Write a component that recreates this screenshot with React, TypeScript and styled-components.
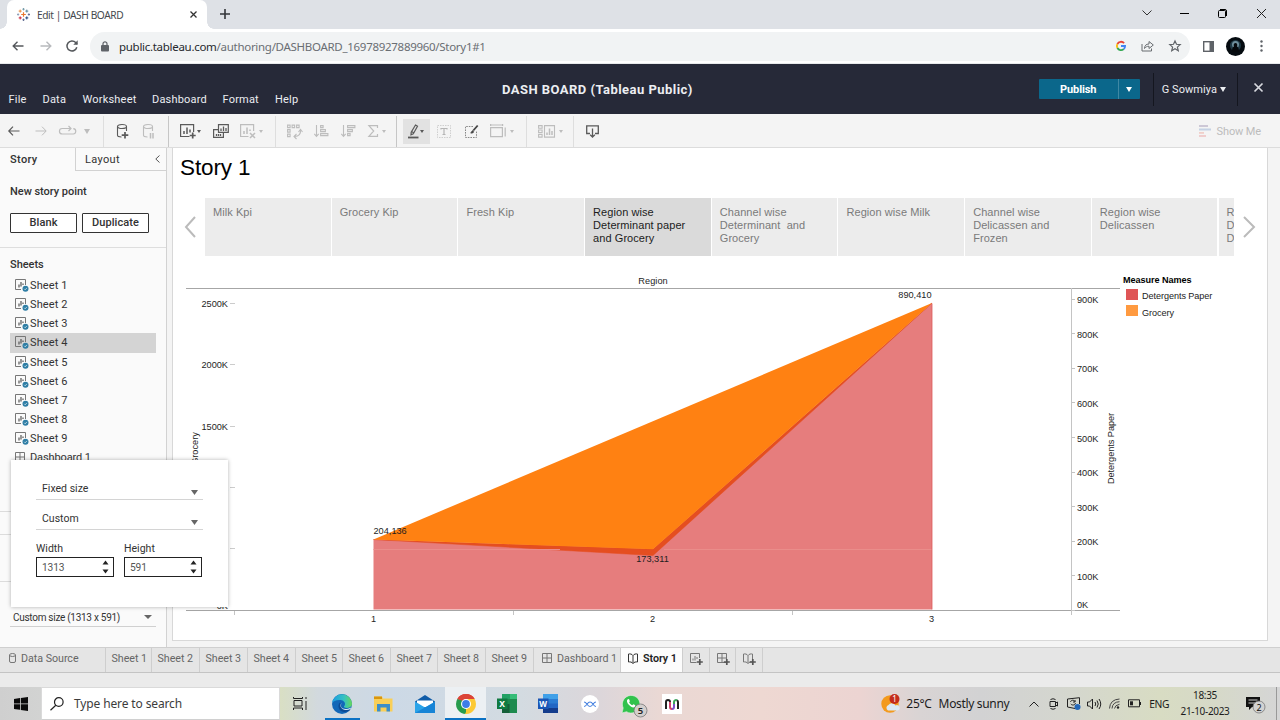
import React from "react";
import styled, { createGlobalStyle } from "styled-components";

const Global = createGlobalStyle`
  * { box-sizing: border-box; }
  body { margin: 0; overflow: hidden; background: #ebebeb; }
  svg { display: block; flex: none; overflow: visible; }
`;

const UI = `"Noto Sans", "Open Sans", sans-serif`;
const TAB = `Roboto, "Liberation Sans", sans-serif`;
const VIZ = `"Liberation Sans", Arial, sans-serif`;

const Screen = styled.div`
  width: 1280px; height: 720px; display: flex; flex-direction: column;
  overflow: hidden; font-family: ${TAB}; background: #ebebeb; white-space: nowrap;
`;
const Glyph = styled.svg<{ $gap?: number; $top?: number }>`
  margin-left: ${(p) => p.$gap ?? 0}px;
  margin-top: ${(p) => p.$top ?? 0}px;
`;
const Label = styled.span<{ $gap?: number; $track?: number; $size?: number }>`
  margin-left: ${(p) => p.$gap ?? 0}px;
  ${(p) => (p.$track !== undefined ? `letter-spacing: ${p.$track}px;` : "")}
  ${(p) => (p.$size ? `font-size: ${p.$size}px;` : "")}
`;
const Spacer = styled.div`flex: 1;`;

/* ---------- browser ---------- */
const TabStrip = styled.div`
  height: 29px; flex: none; display: flex; background: #dee1e6; padding-left: 7px; font-family: ${UI};
`;
const BrowserTab = styled.div`
  width: 200px; height: 29px; background: #fff; display: flex; align-items: center; position: relative;
  padding: 0 10px; font-size: 10.2px; color: #45494d; border-radius: 7px 7px 0 0;
  &::before, &::after { content: ""; position: absolute; bottom: 0; width: 7px; height: 7px; }
  &::before { left: -7px; background: radial-gradient(circle at 0 0, #dee1e6 6.5px, #fff 7px); }
  &::after { right: -7px; background: radial-gradient(circle at 100% 0, #dee1e6 6.5px, #fff 7px); }
`;
const WindowButtons = styled.div`display: flex; align-items: center; height: 26px; padding-right: 14px;`;
const AddressRow = styled.div`
  height: 35px; flex: none; display: flex; align-items: center; background: #fff; padding-left: 12px; border-bottom: 1px solid #e8eaec;
`;
const Omnibox = styled.div`
  width: 1100px; height: 29px; margin-left: 12px; border-radius: 15px; background: #f1f3f4; display: flex; align-items: center;
  font: 11.5px ${UI}; color: #6a6e73; padding: 0 9px 0 10px;
`;
const Host = styled.b`font-weight: 400; color: #26292d;`;

/* ---------- app header ---------- */
const Header = styled.header`
  height: 50px; flex: none; background: #262938; color: #eceef2; display: flex;
`;
const Menu = styled.nav`
  display: flex; width: 502px; padding: 29px 0 0 8.5px; font-size: 11px; line-height: 14px; letter-spacing: 0.2px;
`;
const MenuItem = styled.span<{ $w: number }>`width: ${(p) => p.$w}px;`;
const Title = styled.div`font-weight: 700; font-size: 13px; line-height: 51px; letter-spacing: 0.46px;`;
const Account = styled.div`display: flex; align-items: center; margin-left: auto;`;
const Publish = styled.div`
  display: flex; width: 101px; height: 20px; background: #0b678b; border-radius: 1px; color: #fff; font-weight: 700; font-size: 11px; line-height: 21px;
`;
const PublishText = styled.div`width: 80px; text-align: center; letter-spacing: -0.1px; border-right: 1px solid #3f88a4;`;
const PublishCaret = styled.div`flex: 1; display: grid; place-items: center;`;
const HeaderRule = styled.div<{ $gap: number }>`width: 1px; height: 33px; background: #14161f; margin-left: ${(p) => p.$gap}px;`;

/* ---------- toolbar ---------- */
const Toolbar = styled.div`
  height: 34px; flex: none; display: flex; align-items: center; background: #f4f4f4; border-bottom: 1px solid #dcdcdc;
  padding: 1px 19px 0 8px; font-size: 11px; color: #bcbcbc;
`;
const Rule = styled.div<{ $gap: number; $dark?: boolean }>`
  width: 1px; height: 31px; margin-left: ${(p) => p.$gap}px; background: ${(p) => (p.$dark ? "#c6c6c6" : "#dedede")};
`;
const Pressed = styled.div`
  width: 27px; height: 25px; margin-left: 6px; background: #e2e2e2; display: flex; align-items: center;
`;

/* ---------- workspace ---------- */
const Workspace = styled.div`height: 499px; flex: none; display: flex; background: #f4f4f4; position: relative;`;
const Side = styled.aside`
  width: 167px; height: 499px; background: #fafafa; border-right: 1px solid #d2d2d2; display: flex; flex-direction: column;
  color: #333; font-size: 11px;
`;
const SideTabs = styled.div`height: 23px; flex: none; display: flex; line-height: 23px; letter-spacing: 0.35px;`;
const SideTab = styled.div<{ $active?: boolean }>`
  padding-left: ${(p) => (p.$active ? 10 : 9)}px;
  ${(p) => p.$active
    ? "width: 75px; font-weight: 500;"
    : "flex: 1; border-left: 1px solid #d2d2d2; border-bottom: 1px solid #d2d2d2; display: flex; align-items: center;"}
`;
const SideHeading = styled.div<{ $top: number }>`
  margin: ${(p) => p.$top}px 0 0 10px; font-weight: 500; line-height: 14px; letter-spacing: -0.03px;
`;
const ButtonRow = styled.div`display: flex; gap: 5px; padding: 14px 0 0 10px; height: 49px; border-bottom: 1px solid #dedede;`;
const OutlineButton = styled.div`
  width: 67px; height: 20px; border: 1px solid #333; border-radius: 1px; background: #fff; text-align: center; line-height: 18px;
  font-weight: 500; letter-spacing: 0.1px;
`;
const SheetList = styled.div`margin: 4px 10px 0; height: 187px; overflow: hidden;`;
const SheetRow = styled.div<{ $on?: boolean }>`
  height: 19.15px; display: flex; align-items: center; padding-left: 5px; background: ${(p) => (p.$on ? "#d4d4d4" : "transparent")};
  letter-spacing: 0.12px;
`;
const Divider = styled.div<{ $top: number }>`height: 1px; margin-top: ${(p) => p.$top}px; background: #dcdcdc;`;
const SizeSelect = styled.div`
  margin: auto 10px 20px; height: 21px; border-bottom: 1px solid #d0d0d0; display: flex; align-items: center; padding: 2px 4px 0 3px;
  justify-content: space-between; font-size: 10px; letter-spacing: -0.28px;
`;
const Popup = styled.div`
  position: absolute; left: 11px; top: 312px; width: 217px; height: 147px; background: #fff; box-shadow: 0 0 4px rgba(0,0,0,.3);
  padding: 14px 25px 0; font-size: 10.5px; color: #333; letter-spacing: 0.02px;
`;
const Select = styled.div<{ $h: number }>`
  height: ${(p) => p.$h}px; border-bottom: 1px solid #d4d4d4; display: flex; align-items: flex-end; justify-content: space-between;
  padding: 0 5px 4px 6px; line-height: 13px;
`;
const Fields = styled.div`display: flex; gap: 10px; margin-top: 12px; line-height: 13px;`;
const Field = styled.div`width: 78px;`;
const NumberBox = styled.div`
  margin-top: 2px; height: 20px; border: 1px solid #222; display: flex; align-items: center; justify-content: space-between;
  padding: 0 4px 0 5px; color: #555; font-size: 10.2px; letter-spacing: -0.15px;
`;

const Sheet = styled.main`
  width: 1096px; height: 493px; margin-left: 5px; background: #fff; border: 1px solid #d8d8d8; border-top: 0; font-family: ${VIZ};
`;
const StoryTitle = styled.h1`
  margin: 0; padding: 7px 0 0 7px; height: 49px; font-size: 22.5px; font-weight: 400; line-height: 26px; color: #000; letter-spacing: -0.12px;
`;
const Navigator = styled.div`display: flex; height: 59px; align-items: center;`;
const Points = styled.div`display: flex; width: 1029px; height: 58px; margin-left: 9px; overflow: hidden; gap: 1.2px;`;
const Point = styled.div<{ $on?: boolean }>`
  width: 125.5px; height: 58px; flex: none; padding: 8px 0 0 8px; background: ${(p) => (p.$on ? "#dadada" : "#ececec")};
  color: ${(p) => (p.$on ? "#1c1c1c" : "#7a7a7a")}; font-size: 11px; line-height: 13.3px; white-space: pre; letter-spacing: 0.07px;
`;
const VizRow = styled.div`display: flex; height: 360px; margin-top: 16px; padding-left: 7px;`;
const Legend = styled.div`padding: 2px 0 0 3px; font-size: 9.1px; color: #222; letter-spacing: -0.06px;`;
const LegendTitle = styled.div`font-weight: 700; line-height: 12px; color: #000;`;
const LegendItem = styled.div`display: flex; align-items: center; height: 16.5px; padding: 4px 0 0 3px; gap: 4px;`;
const Swatch = styled.i<{ $c: string }>`width: 12px; height: 11px; margin-top: -4px; background: ${(p) => p.$c};`;

/* ---------- sheet tabs ---------- */
const SheetTabs = styled.div`
  height: 26px; flex: none; display: flex; background: #e5e5e5; border-top: 1px solid #cfcfcf; border-bottom: 1px solid #c4c4c4;
  font-size: 10.7px; line-height: 21px; color: #666; letter-spacing: -0.03px;
`;
const SheetTab = styled.div<{ $w: number; $on?: boolean; $left?: number }>`
  width: ${(p) => p.$w}px; padding-left: ${(p) => p.$left ?? 5.5}px; border-right: 1px solid #cecece; display: flex; gap: 5px;
  background: ${(p) => (p.$on ? "#fcfcfc" : "transparent")}; color: ${(p) => (p.$on ? "#222" : "#666")}; font-weight: ${(p) => (p.$on ? 600 : 400)};
`;

/* ---------- taskbar ---------- */
const Taskbar = styled.footer`
  height: 33px; flex: none; margin-top: 14px; display: flex; align-items: center; font-family: ${UI}; color: #1c1c1c;
  background: linear-gradient(90deg, #cfcfcf 0, #d2d3d2 41px, #d9dfc4 280px, #d2d9de 318px, #ccd9e6 390px, #d3dbe1 520px, #dcd6da 600px,
    #ead8d4 660px, #eed8d2 760px, #ecd4d2 860px, #d9d4d4 920px, #d2d2d3 980px, #d4d6cf 1060px, #d8dcc3 1160px, #d6d9c8 1215px, #d5d5d6 1280px);
`;
const Start = styled.div`width: 41px; height: 33px; display: grid; place-items: center;`;
const Search = styled.div`
  width: 239px; height: 33px; background: #fff; border: 1px solid #dadada; border-bottom-color: #d0d0d0; display: flex; align-items: center;
  font-size: 12px; padding-left: 8px; color: #3c3c3c;
`;
const TaskApp = styled.div<{ $mark?: boolean; $hot?: boolean }>`
  width: 41.3px; height: 33px; display: grid; place-items: center; position: relative;
  background: ${(p) => (p.$hot ? "#ecf0f3" : "transparent")};
  &::after { content: ""; display: ${(p) => (p.$mark || p.$hot ? "block" : "none")}; position: absolute; bottom: 0;
    left: ${(p) => (p.$hot ? 0 : 4)}px; right: ${(p) => (p.$hot ? 0 : 3)}px; height: 2px; background: #0b72c4; }
`;
const Clock = styled.div`
  width: 60px; margin-left: 6px; text-align: center; font-size: 10px; line-height: 15.3px; letter-spacing: -0.33px;
`;
const EdgeLine = styled.div`width: 1px; height: 33px; background: #999; margin: 0 3px 0 11px;`;

const Caret = ({ gap = 0, c = "#666", w = 6, h = 4 }: { gap?: number; c?: string; w?: number; h?: number }) => (
  <Glyph $gap={gap} width={w} height={h} viewBox="0 0 6 4" preserveAspectRatio="none"><path d="M0 0h6L3 4z" fill={c} /></Glyph>
);

const TableauLogo = () => (
  <svg width="13" height="13" viewBox="0 0 13 13" fill="none">
    <path d="M6.5 4.2v4.6M4.2 6.5h4.6" stroke="#e8762d" strokeWidth="1.2" />
    <path d="M3.2 1.6v3M1.7 3.1h3" stroke="#e88a3c" />
    <path d="M9.8 1.6v3M8.3 3.1h3" stroke="#5b879b" />
    <path d="M3.2 8.4v3M1.7 9.9h3" stroke="#c72037" />
    <path d="M9.8 8.4v3M8.3 9.9h3" stroke="#1f447e" />
    <path d="M6.5 0v2.4M5.3 1.2h2.4" stroke="#7199a6" strokeWidth=".9" />
    <path d="M6.5 10.6V13M5.3 11.8h2.4" stroke="#59658c" strokeWidth=".9" />
    <path d="M1.1 5.3v2.4M0 6.5h2.2" stroke="#8a9bb5" strokeWidth=".9" />
    <path d="M11.9 5.3v2.4M10.8 6.5H13" stroke="#5b6591" strokeWidth=".9" />
  </svg>
);

const Browser = () => (
  <>
    <TabStrip>
      <BrowserTab>
        <TableauLogo />
        <Label $gap={7} $track={-0.42}>Edit | DASH BOARD</Label>
        <Spacer />
        <svg width="7" height="7" viewBox="0 0 7 7" stroke="#333" strokeWidth="1.3"><path d="M.5 .5l6 6M6.5 .5l-6 6" /></svg>
      </BrowserTab>
      <Glyph $gap={13} $top={9} width="10" height="10" viewBox="0 0 10 10" stroke="#33363a" strokeWidth="1.6"><path d="M5 0v10M0 5h10" /></Glyph>
      <Spacer />
      <WindowButtons>
        <svg width="10" height="6" viewBox="0 0 10 6" fill="none" stroke="#333"><path d="M.5 .5L5 5 9.5 .5" /></svg>
        <Glyph $gap={28} width="9" height="2"><path d="M0 1.5h9" stroke="#000" /></Glyph>
        <Glyph $gap={29} width="9" height="9" viewBox="0 0 9 9" fill="none" stroke="#000"><rect x=".5" y="1.5" width="7" height="7" rx="1" /><path d="M2 .5h5q1.500 0 1.500 1.500v5" /></Glyph>
        <Glyph $gap={30} width="9" height="9" viewBox="0 0 9 9" stroke="#222"><path d="M0 0l9 9M9 0L0 9" /></Glyph>
      </WindowButtons>
    </TabStrip>
    <AddressRow>
      <svg width="12" height="10" viewBox="0 0 12 10" fill="none" stroke="#55585c" strokeWidth="1.4"><path d="M11.5 5H1.5M5.5 .7L1.200 5l4.300 4.300" /></svg>
      <Glyph $gap={16} width="12" height="10" viewBox="0 0 12 10" fill="none" stroke="#b8babd" strokeWidth="1.4"><path d="M.5 5h10M6.500 .7L10.800 5 6.500 9.300" /></Glyph>
      <Glyph $gap={14} width="12" height="12" viewBox="0 0 12 12" fill="none" stroke="#55585c" strokeWidth="1.5"><path d="M10.800 7.300A5 5 0 1 1 9.700 2.600L11 4" /><path d="M11.700 .3v4.400H7.300z" fill="#55585c" stroke="none" /></Glyph>
      <Omnibox>
        <svg width="10" height="11" viewBox="0 0 10 11"><rect x="1" y="4" width="8" height="6.5" rx="1" fill="#5f6368" /><path d="M3 4V2.800a2 2 0 0 1 4 0V4" fill="none" stroke="#5f6368" strokeWidth="1.2" /></svg>
        <Label $gap={9} $track={-0.29}><Host>public.tableau.com</Host>/authoring/DASHBOARD_16978927889960/Story1#1</Label>
        <Spacer />
        <svg width="10" height="10" viewBox="0 0 10 10" fill="none" strokeWidth="1.8">
          <path d="M8.100 2.100A4.100 4.100 0 0 0 1.400 3" stroke="#ea4335" /><path d="M1.400 3a4.100 4.100 0 0 0 0 4" stroke="#fbbc05" />
          <path d="M1.400 7A4.100 4.100 0 0 0 7.700 8.100" stroke="#34a853" /><path d="M7.700 8.100A4.100 4.100 0 0 0 9.100 5H5" stroke="#4285f4" />
        </svg>
        <Glyph $gap={15} width="13" height="12" viewBox="0 0 13 12" fill="none" stroke="#686c70"><path d="M1 4v7h9.500V8.500M3.500 8.500C3.700 5.500 5 4 8 4V1.500L12.300 5 8 8.500V6.200C6 6.200 4.700 7 3.500 8.500z" /></Glyph>
        <Glyph $gap={15} width="12" height="12" viewBox="0 0 12 12" fill="none" stroke="#5f6368" strokeWidth="1.2"><path d="M6 .9l1.500 3.400 3.700.3-2.800 2.500.9 3.600L6 8.800l-3.300 1.900.9-3.600L.8 4.600l3.700-.3z" /></Glyph>
      </Omnibox>
      <Glyph $gap={13} width="11" height="11" viewBox="0 0 11 11"><rect x=".7" y=".7" width="9.600" height="9.600" fill="none" stroke="#5f6368" strokeWidth="1.4" /><path d="M6.500 0H11v11H6.500z" fill="#5f6368" /></Glyph>
      <Glyph $gap={12} width="19" height="19" viewBox="0 0 19 19"><circle cx="9.5" cy="9.5" r="9.5" fill="#050b10" /><circle cx="9.5" cy="8.5" r="5.5" fill="#1f3a46" /><circle cx="9.5" cy="7.5" r="3.5" fill="#6e8f9c" /><path d="M6 15c0-4 1-5 2-5.500-.8-2 .2-3.500 1.500-3.500s2.300 1.500 1.500 3.500c1 .5 2 1.500 2 5.500z" fill="#05090c" /></Glyph>
      <Glyph $gap={15} width="3" height="12" viewBox="0 0 3 12" fill="#5f6368"><circle cx="1.5" cy="1.5" r="1.2" /><circle cx="1.5" cy="6" r="1.2" /><circle cx="1.5" cy="10.5" r="1.2" /></Glyph>
    </AddressRow>
  </>
);

const menus: [string, number][] = [["File", 34], ["Data", 40], ["Worksheet", 69.5], ["Dashboard", 70.5], ["Format", 52.5], ["Help", 30]];

const AppHeader = () => (
  <Header>
    <Menu>{menus.map(([t, w]) => <MenuItem key={t} $w={w}>{t}</MenuItem>)}</Menu>
    <Title>DASH BOARD (Tableau Public)</Title>
    <Account>
      <Publish><PublishText>Publish</PublishText><PublishCaret><Caret c="#fff" w={6} h={5} /></PublishCaret></Publish>
      <HeaderRule $gap={13} />
      <Label $gap={8} $size={11} $track={0.06}>G Sowmiya</Label>
      <Caret gap={3} c="#eceef2" w={6} h={5} />
      <HeaderRule $gap={11} />
      <Glyph $gap={16} $top={-3} width="9" height="9" viewBox="0 0 9 9" stroke="#d8dae0" strokeWidth="1.7"><path d="M.5 .5l8 8M8.500 .5l-8 8" /></Glyph>
      <Label $gap={17} />
    </Account>
  </Header>
);

const D = "#5a5a5a";
const L = "#bdbdbd";

const MainToolbar = () => (
  <Toolbar>
    <svg width="12" height="10" viewBox="0 0 12 10" fill="none" stroke={D} strokeWidth="1.2"><path d="M11.500 5H1M5 .7L.8 5 5 9.300" /></svg>
    <Glyph $gap={15} width="12" height="10" viewBox="0 0 12 10" fill="none" stroke={L}><path d="M.5 5H11M7 .7L11.200 5 7 9.300" /></Glyph>
    <Glyph $gap={12} width="17" height="10" viewBox="0 0 17 10" fill="none" stroke={L} strokeWidth="1.2"><path d="M4 8H3.200a2.700 2.700 0 0 1 0-5.500H12M9.500 0L12 2.500 9.500 5M14.300 2.600A2.700 2.700 0 0 1 13.800 8H4" /></Glyph>
    <Caret gap={8} c={L} w={6} h={5} />
    <Rule $gap={13} />
    <Glyph $gap={13} width="13" height="15" viewBox="0 0 13 15" fill="none" stroke={D} strokeWidth="1.1"><ellipse cx="5" cy="2.500" rx="4.500" ry="2" /><path d="M.5 2.500v8.800c0 1 2 1.700 4 1.700M9.500 2.500V7" /><path d="M8 8v6.500M4.700 11.200h6.600" strokeWidth="1.7" /></Glyph>
    <Glyph $gap={13} width="12" height="15" viewBox="0 0 12 15" fill="none" stroke={L} strokeWidth="1.1"><ellipse cx="5" cy="2.500" rx="4.500" ry="2" /><path d="M.5 2.500v8.800c0 1 2 1.700 4 1.700M9.500 2.500V7" /><path d="M7.500 9v5.500M10 9v5.500" strokeWidth="1.5" /></Glyph>
    <Rule $gap={13} $dark />
    <Glyph $gap={11} width="17" height="15" viewBox="0 0 17 15" fill="none" stroke={D} strokeWidth="1.2"><path d="M9.500 12.500H.6V.6h13V8" /><path d="M4 10V7M7 10V3.500M10 8.500V5.500" strokeWidth="1.5" /><path d="M12.700 8.500v6M9.700 11.500h6" strokeWidth="1.7" /></Glyph>
    <Caret gap={0} c={D} w={4} h={3} />
    <Glyph $gap={12} width="16" height="14" viewBox="0 0 16 14" fill="none" stroke={D} strokeWidth="1.2"><path d="M5.500 .6h9.800v7.800H5.500zM5 5.600H.6v7.800h9.800V9" /><path d="M8 7V4.500M10.500 7V2.500M13 7V4M3.500 12v-2M5.500 12v-2M7.500 12v-2" strokeWidth="1.3" /></Glyph>
    <Glyph $gap={11} width="17" height="15" viewBox="0 0 17 15" fill="none" stroke={L} strokeWidth="1.2"><path d="M8.500 12.500H.6V.6h13V7" /><path d="M4 10V7M7 10V3.500M10 7V5.500" strokeWidth="1.5" /><path d="M10 9l5 5M15 9l-5 5" strokeWidth="1.5" /></Glyph>
    <Caret gap={2} c={L} w={4} h={3} />
    <Rule $gap={12} />
    <Glyph $gap={11} width="16" height="15" viewBox="0 0 16 15" fill="none" stroke={L} strokeWidth="1.1"><path d="M.6 1.100h2.500v2.500H.6zM5.100 1.100h2.500v2.500H5.100zM9.600 1.100h2.500v2.500H9.600zM.6 5.600h2.500v2.500H.6zM.6 10.100h2.500v2.500H.6z" /><path d="M13.500 6c.5 4-1.500 6-6 6.500M9.500 10l-2.500 2.500L9.500 15M11.500 8l2-2.500 2 2.500" /></Glyph>
    <Glyph $gap={11} width="15" height="14" viewBox="0 0 15 14" fill="none" stroke={L} strokeWidth="1.1"><path d="M2.500 1v11M.3 9.800l2.200 2.500 2.200-2.500M6.600 1.600h2.500v2H6.600zM6.600 5.600h4.800v2H6.600zM6.600 9.600h7.300v2H6.600z" /></Glyph>
    <Glyph $gap={12} width="15" height="14" viewBox="0 0 15 14" fill="none" stroke={L} strokeWidth="1.1"><path d="M2.500 1v11M.3 9.800l2.200 2.500 2.200-2.500M6.600 1.600h7.300v2H6.600zM6.600 5.600h4.800v2H6.600zM6.600 9.600h2.500v2H6.600z" /></Glyph>
    <Glyph $gap={12} width="11" height="12" viewBox="0 0 11 12" fill="none" stroke={L} strokeWidth="1.2"><path d="M9.500 3V.7H.9L5.700 6 .9 11.300H9.500V9" /></Glyph>
    <Caret gap={3} c={L} w={4} h={3} />
    <Rule $gap={10} $dark />
    <Pressed>
      <Glyph $gap={5} width="12" height="15" viewBox="0 0 12 15" fill="none" stroke={D} strokeWidth="1.2"><path d="M7.500 1l2 1.200-4.200 7.500-2.300 1 .2-2.500zM3.500 7.500l2.200 1.300" /><path d="M0 13.500h10.500" strokeWidth="1.8" /></Glyph>
      <Caret gap={0} c={D} w={4} h={3} />
    </Pressed>
    <Glyph $gap={7} width="14" height="13" viewBox="0 0 14 13" fill="none" stroke="#cfcfcf"><rect x=".5" y=".5" width="13" height="12" strokeDasharray="1.5 1" /><path d="M4 4.500V3.500h6v1M7 3.500v6M5.500 9.500h3" stroke="#b5b5b5" strokeWidth="1.2" /></Glyph>
    <Glyph $gap={14} width="14" height="13" viewBox="0 0 14 13" fill="none" stroke="#888"><path d="M8 1.500H.5v11h11V6" strokeDasharray="1.6 1" /><path d="M12.700 .5L8.300 5.500" stroke="#444" strokeWidth="1.8" /><path d="M8 5.500c-1.500 0-1.500 2-2.500 2.500 1.500.5 3.300 0 3.300-1.500" fill="#444" stroke="#444" strokeWidth=".5" /></Glyph>
    <Glyph $gap={11} width="16" height="14" viewBox="0 0 16 14" fill="none" stroke={L} strokeWidth="1.2"><path d="M.6 3.600h11.800v9H.6zM.6 1h12M.6 0v2M12.600 0v2M15.200 3.600v9" /></Glyph>
    <Caret gap={4} c={L} w={4} h={3} />
    <Rule $gap={12} />
    <Glyph $gap={11} width="17" height="13" viewBox="0 0 17 13" fill="none" stroke={L} strokeWidth="1.1"><path d="M6.500 .6h10v11.500h-10zM.6 .6h3.500v2.600H.6zM.6 5h3.500v2.600H.6zM.6 9.500h3.500v2.600H.6z" /><path d="M9 10V7.500M11.500 10V3.500M14 10V6" strokeWidth="1.5" /></Glyph>
    <Caret gap={4} c={L} w={4} h={3} />
    <Rule $gap={10} />
    <Glyph $gap={12} width="13" height="13" viewBox="0 0 13 13" fill="none" stroke={D} strokeWidth="1.3"><path d="M4 8.500H.7V.8h11.600v7.700H9M6.500 3.500V12M4.200 9.700L6.500 12l2.300-2.300" /></Glyph>
    <Spacer />
    <svg width="12" height="12" viewBox="0 0 12 12"><path d="M0 0h9v2H0z" fill="#cdc8d6" /><path d="M0 3.500h12v2H0z" fill="#c5d2e4" /><path d="M0 7h5v1.800H0z" fill="#f0cfc9" /><path d="M0 10h7v2H0z" fill="#efcdcd" /></svg>
    <Label $gap={6} $track={-0.12}>Show Me</Label>
  </Toolbar>
);

const SheetIcon = () => (
  <svg width="14" height="13" viewBox="0 0 14 13" fill="none" stroke="#777"><path d="M6 10.500H.5V.5h10V6" /><path d="M4 8.500V5.500M6 7.500V3M8 6V4.500" stroke="#555" strokeWidth="1.2" /><circle cx="10.500" cy="9.800" r="3" fill="#2f7ea5" stroke="none" /><path d="M9.200 9.800l1 1 1.700-1.900" stroke="#d5e7ef" strokeWidth=".8" /></svg>
);
const GridIcon = ({ c = "#777", plus = false }) => (
  <svg width="13" height="12" viewBox="0 0 13 12" fill="none" stroke={c}><path d="M.5 .5h9v9h-9zM5 .5v9M.5 5h9" />{plus && <path d="M9.800 6v6M6.800 9h6" strokeWidth="1.7" stroke="#555" />}</svg>
);
const BookIcon = ({ c = "#777", plus = false }) => (
  <svg width={plus ? 13 : 10} height="12" viewBox={plus ? "0 0 13 12" : "0 0 10 12"} fill="none" stroke={c}><path d="M5 2.500v8M5 2.500C4 1 2 .7.500 1v8c1.500-.3 3.500 0 4.500 1.500C6 9 8 8.700 9.500 9V1C8 .7 6 1 5 2.500z" />{plus && <path d="M9.800 6v6M6.800 9h6" strokeWidth="1.7" stroke="#555" />}</svg>
);
const Stepper = () => (
  <svg width="7" height="14" viewBox="0 0 7 14" fill="#222"><path d="M.5 4.500L3.500 .5l3 4zM.5 9.500h6l-3 4z" /></svg>
);

const SidePanel = () => (
  <Side>
    <SideTabs>
      <SideTab $active>Story</SideTab>
      <SideTab>Layout<Glyph $gap={35} width="5" height="8" viewBox="0 0 5 8" fill="none" stroke="#555"><path d="M4.500 .5L.8 4l3.700 3.500" /></Glyph></SideTab>
    </SideTabs>
    <SideHeading $top={14}>New story point</SideHeading>
    <ButtonRow><OutlineButton>Blank</OutlineButton><OutlineButton>Duplicate</OutlineButton></ButtonRow>
    <SideHeading $top={10}>Sheets</SideHeading>
    <SheetList>
      {[1, 2, 3, 4, 5, 6, 7, 8, 9].map((n) => (
        <SheetRow key={n} $on={n === 4}><SheetIcon /><Label $gap={1}>Sheet {n}</Label></SheetRow>
      ))}
      <SheetRow><GridIcon /><Label $gap={2} $track={-0.12}>Dashboard 1</Label></SheetRow>
    </SheetList>
    <Divider $top={48} />
    <Divider $top={22} />
    <Divider $top={46} />
    <SizeSelect><span>Custom size (1313 x 591)</span><Caret w={8} h={4} /></SizeSelect>
  </Side>
);

const left: [string, number][] = [["2500K", 303], ["2000K", 364], ["1500K", 426], ["1000K", 487], ["500K", 548]];
const right = ["0K", "100K", "200K", "300K", "400K", "500K", "600K", "700K", "800K", "900K"];

const AreaChart = () => (
  <svg width="940" height="360" viewBox="180 272 940 360" fontFamily={VIZ} fontSize="9.2" fill="#1e1e1e">
    <path d="M373.500 539.500L653 549 932 303V609.500H373.500z" fill="#e67d7d" />
    <path d="M373.500 539.500L653 555.500 932 303 653 549z" fill="#e54e20" stroke="#e54e20" strokeWidth=".5" />
    <path d="M373.500 539.500L932 303 653 549.300z" fill="#ff8112" />
    <path d="M373.500 549.500H560M664 549.500H932" stroke="#ea8d8a" />
    <path d="M932 303.500V609.500" stroke="#dc5a5c" strokeWidth=".8" />
    <path d="M186 288.500H1120M186 610.500H1120" stroke="#a6a6a6" />
    <path d="M1071.500 288V615M513.500 611v4M792.500 611v4M234.500 611v4" stroke="#c4c4c4" />
    {left.map(([t, y]) => (
      <g key={t}><path d={`M230 ${y + 0.5}h5`} stroke="#ccc" /><text x="228" y={y + 3.8} textAnchor="end">{t}</text></g>
    ))}
    <text x="228" y="608.500" textAnchor="end">0K</text>
    {right.map((t, i) => {
      const y = 610.7 - i * 34.55;
      return <g key={t}><path d={`M1072 ${Math.round(y) - 0.5}h3`} stroke="#c4c4c4" /><text x="1077" y={i === 0 ? 607.8 : y + 3.6}>{t}</text></g>;
    })}
    <text x="653" y="283.500" textAnchor="middle" letterSpacing=".05">Region</text>
    <text x="373.500" y="622" textAnchor="middle">1</text>
    <text x="652.500" y="622" textAnchor="middle">2</text>
    <text x="931.500" y="622" textAnchor="middle">3</text>
    <text x="373.500" y="534">204,136</text>
    <text x="652.500" y="562" textAnchor="middle">173,311</text>
    <text x="931.500" y="297.500" textAnchor="end">890,410</text>
    <text transform="translate(197.500 448.500) rotate(-90)" textAnchor="middle">Grocery</text>
    <text transform="translate(1114 448.500) rotate(-90)" textAnchor="middle" letterSpacing="-.05">Detergents Paper</text>
  </svg>
);

const points = ["Milk Kpi", "Grocery Kip", "Fresh Kip", "Region wise\nDeterminant paper\nand Grocery", "Channel wise\nDeterminant  and\nGrocery",
  "Region wise Milk", "Channel wise\nDelicassen and\nFrozen", "Region wise\nDelicassen", "R\nD\nD"];

const Story = () => (
  <Sheet>
    <StoryTitle>Story 1</StoryTitle>
    <Navigator>
      <Glyph $gap={12} width="11" height="22" viewBox="0 0 11 22" fill="none" stroke="#bbb" strokeWidth="2"><path d="M10 1L1 11l9 10" /></Glyph>
      <Points>{points.map((p, i) => <Point key={p} $on={i === 3}>{p}</Point>)}</Points>
      <Glyph $gap={9} width="12" height="22" viewBox="0 0 12 22" fill="none" stroke="#bbb" strokeWidth="2"><path d="M1 1l10 10L1 21" /></Glyph>
    </Navigator>
    <VizRow>
      <AreaChart />
      <Legend>
        <LegendTitle>Measure Names</LegendTitle>
        <LegendItem><Swatch $c="#df5556" />Detergents Paper</LegendItem>
        <LegendItem><Swatch $c="#ff9a40" />Grocery</LegendItem>
      </Legend>
    </VizRow>
  </Sheet>
);

const SizePopup = () => (
  <Popup>
    <Select $h={26}>Fixed size<Caret w={7} h={5} /></Select>
    <Select $h={30}>Custom<Caret w={7} h={5} /></Select>
    <Fields>
      <Field>Width<NumberBox>1313<Stepper /></NumberBox></Field>
      <Field>Height<NumberBox>591<Stepper /></NumberBox></Field>
    </Fields>
  </Popup>
);

const TabIcon = styled.div`padding-top: 5px;`;

const BottomTabs = () => (
  <SheetTabs>
    <SheetTab $w={106} $left={9}>
      <TabIcon><svg width="7" height="10" viewBox="0 0 7 10" fill="none" stroke="#777"><ellipse cx="3.500" cy="2" rx="3" ry="1.500" /><path d="M.5 2v6q0 1.500 1.500 1.500h3q1.500 0 1.500-1.500V2" /></svg></TabIcon>
      Data Source
    </SheetTab>
    {[46, 48, 48, 48, 47, 48, 47, 48, 48].map((w, i) => <SheetTab key={i} $w={w}>Sheet {i + 1}</SheetTab>)}
    <SheetTab $w={87} $left={8}><TabIcon><svg width="10" height="10" viewBox="0 0 10 10" fill="none" stroke="#777"><path d="M.5 .5h9v9h-9zM5 .5v9M.5 5h9" /></svg></TabIcon>Dashboard 1</SheetTab>
    <SheetTab $w={62} $on $left={7}><TabIcon><BookIcon c="#333" /></TabIcon>Story 1</SheetTab>
    <SheetTab $w={27} $left={7}><TabIcon><svg width="13" height="12" viewBox="0 0 13 12" fill="none" stroke="#777"><path d="M6.500 9.500h-6v-9h9V5M3 7.500v-2M5 7.500V3M7 6V4" /><path d="M9.800 6v6M6.800 9h6" strokeWidth="1.7" stroke="#555" /></svg></TabIcon></SheetTab>
    <SheetTab $w={26} $left={7}><TabIcon><GridIcon plus /></TabIcon></SheetTab>
    <SheetTab $w={27} $left={7}><TabIcon><BookIcon plus /></TabIcon></SheetTab>
  </SheetTabs>
);

const Bar = () => (
  <Taskbar>
    <Start><svg width="14" height="14" viewBox="0 0 14 14"><path d="M0 2l6-.9v5.400H0zM6.800 1L14 0v6.500H6.800zM0 7.300h6v5.400L0 12zM6.800 7.300H14V14l-7.200-1z" fill="#0a0a0a" /></svg></Start>
    <Search>
      <svg width="14" height="14" viewBox="0 0 14 14" fill="none" stroke="#222" strokeWidth="1.2"><circle cx="8.800" cy="5" r="4.300" /><path d="M5.800 8.200L.5 13.300" /></svg>
      <Label $gap={10} $track={-0.13}>Type here to search</Label>
    </Search>
    <TaskApp><svg width="15" height="13" viewBox="0 0 15 13" fill="none" stroke="#222"><path d="M1 3.500h8v5.500H1zM.5 0v1.500h9V0M.5 13v-2h9v2M13 4v9M13 0v2" /></svg></TaskApp>
    <TaskApp $mark>
      <svg width="20" height="20" viewBox="0 0 20 20">
        <defs><linearGradient id="wave" x1="0" x2="1"><stop stopColor="#1b9de2" /><stop offset=".6" stopColor="#35c1c1" /><stop offset="1" stopColor="#66d85a" /></linearGradient></defs>
        <circle cx="10" cy="10" r="10" fill="#1267b8" /><path d="M.1 9A10 10 0 0 1 20 9.500C20 13 17 14 14.500 14c-2 0-2.500-1-2.500-1.500s1-1 1-2.500C13 7.500 10.500 6 7.500 6 3.500 6 .8 7.800.1 9z" fill="url(#wave)" />
        <path d="M8 8.500C5 11 6.500 17.500 12 18c3 .2 5-1 6.500-2.500C13 17.500 8.500 14 8 8.500z" fill="#0c4a94" /><path d="M9.800 9.200c-1.500 1.300-1.200 3.700.7 5.100 2 1.200 5 1 8.500-.8l-.3 1.200C15 16.500 10.500 16.500 8.800 13c-.6-1.500-.5-3 1-3.800z" fill="#dfeaf2" />
      </svg>
    </TaskApp>
    <TaskApp><svg width="19" height="16" viewBox="0 0 19 16"><path d="M0 .5h8l1 2h9.500V15.500H0z" fill="#f9cf57" /><path d="M0 .5h8v2.500H0z" fill="#d9960f" /><path d="M3 8h13v7.500h-3.500v-4h-6v4H3z" fill="#3b8ec9" /></svg></TaskApp>
    <TaskApp><svg width="20" height="18" viewBox="0 0 20 18"><path d="M0 6.500L10 0l10 6.500V18H0z" fill="#0f5ca8" /><path d="M2 5.500h16V12H2z" fill="#fff" /><path d="M0 6.500l10 6 10-6V18H0z" fill="#2aa3e8" /><path d="M0 18l20-11v11z" fill="#1784d6" /></svg></TaskApp>
    <TaskApp $hot><svg width="20" height="20" viewBox="0 0 20 20"><path d="M10 10L1.340 5A10 10 0 0 1 18.660 5z" fill="#dc4437" /><path d="M10 10l8.660-5A10 10 0 0 1 10 20z" fill="#fcc934" /><path d="M10 10v10A10 10 0 0 1 1.340 5z" fill="#279c4d" /><path d="M10 5h8.660L14 12.500z" fill="#fcc934" /><path d="M1.340 5l4.400 7.500L10 8z" fill="#279c4d" /><path d="M18.660 5H10L5 6 1.340 5A10 10 0 0 1 18.660 5z" fill="#dc4437" /><path d="M14.300 12.500L10 20l-1-.1 3-6z" fill="#fcc934" /><circle cx="10" cy="10" r="5" fill="#fff" /><circle cx="10" cy="10" r="3.900" fill="#3e7de8" /></svg></TaskApp>
    <TaskApp><svg width="20" height="19" viewBox="0 0 20 19"><path d="M5 0h15v19H5z" fill="#1d8a4e" /><path d="M12.500 0H20v5h-7.500z" fill="#35bd78" /><path d="M5 0h7.500v5H5z" fill="#22a164" /><path d="M5 10h7.500v9H5z" fill="#156039" /><rect y="4.500" width="10.500" height="10.500" fill="#107a41" /><text x="5.200" y="12.800" fontSize="8.500" fontWeight="700" textAnchor="middle" fill="#fff">X</text></svg></TaskApp>
    <TaskApp><svg width="20" height="19" viewBox="0 0 20 19"><path d="M5 0h15v19H5z" fill="#2266c4" /><path d="M5 0h15v5H5z" fill="#40a0e8" /><path d="M5 5h15v4.500H5z" fill="#2b7cd3" /><path d="M5 14h15v5H5z" fill="#143c8c" /><rect y="4.500" width="10.500" height="10.500" fill="#1a56b5" /><text x="5.200" y="12.800" fontSize="8" fontWeight="700" textAnchor="middle" fill="#fff">W</text></svg></TaskApp>
    <TaskApp><svg width="18" height="18" viewBox="0 0 18 18" fill="none"><circle cx="9" cy="9" r="9" fill="#fff" /><path d="M3 7c3 0 3 4.500 6 4.500S12 7 15 7M3 11.500C6 11.500 6 7 9 7s3 4.500 6 4.500" stroke="#4b84e0" strokeWidth="1.1" /></svg></TaskApp>
    <TaskApp><svg width="20" height="20" viewBox="0 0 20 20"><path d="M1 19l1.200-5A8.800 8.800 0 1 1 5.500 17.700z" fill="#32c24d" stroke="#e6f4e6" strokeWidth=".6" /><path d="M6.800 5.200c-1.500 1-1 3.300 1 5.600 2 2.200 4.700 3.400 6 2 .8-.9.700-1.500-.3-2l-1.200-.6-1 1c-1.500-.6-2.500-1.600-3.200-3l.8-1-.7-1.700c-.3-.6-.8-.7-1.400-.3z" fill="#fff" /><circle cx="19.500" cy="16.500" r="6.500" fill="#d3cfcd" stroke="#777" strokeWidth=".8" /><text x="19.500" y="20" fontSize="9.500" fontWeight="600" textAnchor="middle" fill="#222">5</text></svg></TaskApp>
    <TaskApp><svg width="20" height="20" viewBox="0 0 20 20" fill="none" strokeWidth="2"><rect width="20" height="20" fill="#fff" /><path d="M4 15V8a2 2 0 0 1 4 0v5" stroke="#222" /><path d="M8 8v5a2 2 0 0 0 2 2" stroke="#d6416b" /><path d="M12 8v5a2 2 0 0 1-2 2" stroke="#7b52c9" /><path d="M12 10V8a2 2 0 0 1 3-1.700" stroke="#3aa65a" /><path d="M15 6.300A2 2 0 0 1 16 8v7" stroke="#222" /></svg></TaskApp>
    <Spacer />
    <svg width="19" height="19" viewBox="0 0 19 19"><circle cx="9" cy="10" r="8.700" fill="#f39a1e" /><path d="M7 16.500a3 3 0 0 1 .5-5.500 4 4 0 0 1 7 .5 2.600 2.600 0 0 1 2.500 5z" fill="#dbe9f6" /><circle cx="13.500" cy="5" r="5" fill="#c42b1c" /><text x="13.500" y="8" fontSize="8" textAnchor="middle" fill="#fff">1</text></svg>
    <Label $gap={6} $size={12} $track={-0.3}>25°C</Label>
    <Label $gap={7} $size={12} $track={-0.33}>Mostly sunny</Label>
    <Glyph $gap={20} width="10" height="6" viewBox="0 0 10 6" fill="none" stroke="#222"><path d="M.5 5.500L5 1l4.500 4.500" /></Glyph>
    <Glyph $gap={10} width="9" height="12" viewBox="0 0 9 12" fill="none" stroke="#222"><path d="M1 3.500h5.500v5H1zM6.500 5l2-1v4l-2-1M1.500 1.500Q4 0 6.500 1.500M1.500 10.500Q4 12 6.500 10.500" /></Glyph>
    <Glyph $gap={9} width="14" height="13" viewBox="0 0 14 13" fill="none" stroke="#222"><path d="M8 11.500L.5 10V2L12.500 .7V7M3.500 5c.5-2 3-2.500 4.500-.5M8.500 6c-.5 2.500-3.500 2.500-4.700 1M8 3v2H6" /><circle cx="10.500" cy="10" r="3" fill="#2468b8" stroke="none" /></Glyph>
    <Glyph $gap={6} width="15" height="12" viewBox="0 0 15 12" fill="none" stroke="#222"><path d="M.5 4v4h2L5.500 11V1L2.500 4zM8 4q1.500 2 0 4M10 2.500q2.500 3.500 0 7M12 1q3.500 5 0 10" /></Glyph>
    <Glyph $gap={7} width="11" height="11" viewBox="0 0 11 11" fill="none" stroke="#444"><path d="M.5 10.500Q1 1.500 10.500 1M3 10.500Q3.500 4 10.500 3.700M5.500 10.500Q6 7 10.500 6.300" /><circle cx="9" cy="9.500" r="1.200" fill="#222" stroke="none" /></Glyph>
    <Glyph $gap={8} width="13" height="9" viewBox="0 0 13 9" fill="none" stroke="#222"><path d="M.5 .8h11v7H.5zM12.500 3v3" /><path d="M2 2.300h3v4H2z" fill="#222" stroke="none" /></Glyph>
    <Label $gap={8} $size={10.3} $track={-0.45}>ENG</Label>
    <Clock>18:35<br />21-10-2023</Clock>
    <Glyph $gap={11} width="19" height="19" viewBox="0 0 19 19"><path d="M0 3h14v10H6l-3 3v-3H0z" fill="#111" /><path d="M2.500 6h9M2.500 9h9" stroke="#ccc" /><circle cx="13" cy="13" r="6" fill="#d2d2d2" stroke="#777" strokeWidth=".8" /><text x="13" y="16.500" fontSize="9" textAnchor="middle" fill="#111">2</text></Glyph>
    <EdgeLine />
  </Taskbar>
);

export default function App() {
  return (
    <Screen>
      <Global />
      <Browser />
      <AppHeader />
      <MainToolbar />
      <Workspace>
        <SidePanel />
        <Story />
        <SizePopup />
      </Workspace>
      <BottomTabs />
      <Bar />
    </Screen>
  );
}
